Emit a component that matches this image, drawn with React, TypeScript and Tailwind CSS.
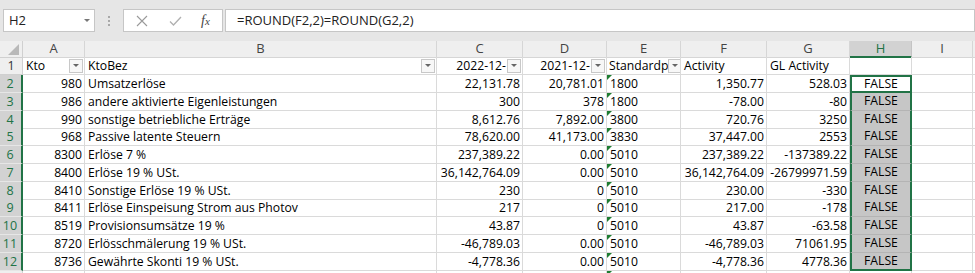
import React from "react";

type Row = {
  n: number;
  h: string;
  a: string;
  b: string;
  c: string;
  d: string;
  e: string;
  f: string;
  g: string;
};

const rows: Row[] = [
  { n: 2, h: "h-[18px]", a: "980", b: "Umsatzerlöse", c: "22,131.78", d: "20,781.01", e: "1800", f: "1,350.77", g: "528.03" },
  { n: 3, h: "h-[18px]", a: "986", b: "andere aktivierte Eigenleistungen", c: "300", d: "378", e: "1800", f: "-78.00", g: "-80" },
  { n: 4, h: "h-[17px]", a: "990", b: "sonstige betriebliche Erträge", c: "8,612.76", d: "7,892.00", e: "3800", f: "720.76", g: "3250" },
  { n: 5, h: "h-[18px]", a: "968", b: "Passive latente Steuern", c: "78,620.00", d: "41,173.00", e: "3830", f: "37,447.00", g: "2553" },
  { n: 6, h: "h-[18px]", a: "8300", b: "Erlöse 7 %", c: "237,389.22", d: "0.00", e: "5010", f: "237,389.22", g: "-137389.22" },
  { n: 7, h: "h-[18px]", a: "8400", b: "Erlöse 19 % USt.", c: "36,142,764.09", d: "0.00", e: "5010", f: "36,142,764.09", g: "-26799971.59" },
  { n: 8, h: "h-[17px]", a: "8410", b: "Sonstige Erlöse 19 % USt.", c: "230", d: "0", e: "5010", f: "230.00", g: "-330" },
  { n: 9, h: "h-[18px]", a: "8411", b: "Erlöse Einspeisung Strom aus Photov", c: "217", d: "0", e: "5010", f: "217.00", g: "-178" },
  { n: 10, h: "h-[18px]", a: "8519", b: "Provisionsumsätze 19 %", c: "43.87", d: "0", e: "5010", f: "43.87", g: "-63.58" },
  { n: 11, h: "h-[18px]", a: "8720", b: "Erlösschmälerung 19 % USt.", c: "-46,789.03", d: "0.00", e: "5010", f: "-46,789.03", g: "71061.95" },
  { n: 12, h: "h-[18px]", a: "8736", b: "Gewährte Skonti 19 % USt.", c: "-4,778.36", d: "0.00", e: "5010", f: "-4,778.36", g: "4778.36" },
];

const GRID =
  "grid grid-cols-[23px_62px_352px_86px_84px_74px_86px_83px_62px_61px_1fr]";

const cell = "border-r border-b border-[#dadada] overflow-hidden whitespace-nowrap leading-[17px] relative";

function FilterButton() {
  return (
    <span className="flex h-[14px] w-[14px] shrink-0 items-center justify-center border border-[#c8c8c8] bg-[#f7f7f7]">
      <span className="h-0 w-0 border-x-[3px] border-t-[3px] border-x-transparent border-t-[#666]" />
    </span>
  );
}

function ErrorMark() {
  return (
    <span className="absolute left-0 top-0 h-0 w-0 border-r-[5px] border-t-[5px] border-r-transparent border-t-[#1e7d32]" />
  );
}

function FormulaBar() {
  return (
    <div className="flex h-[41px] items-center bg-[#e6e6e6] pl-[3px]">
      <div className="flex h-[23px] w-[92px] items-center justify-between border border-[#c6c6c6] bg-white pl-[5px] pr-[4px] text-[13px] text-[#222]">
        <span>H2</span>
        <span className="h-0 w-0 border-x-[3px] border-t-[3px] border-x-transparent border-t-[#777]" />
      </div>
      <div className="flex w-[28px] flex-col items-center gap-[2px]">
        <span className="h-[2px] w-[2px] bg-[#a8a8a8]" />
        <span className="h-[2px] w-[2px] bg-[#a8a8a8]" />
        <span className="h-[2px] w-[2px] bg-[#a8a8a8]" />
      </div>
      <div className="flex h-[23px] w-[100px] items-center border border-[#c6c6c6] bg-white">
        <svg width="12" height="12" viewBox="0 0 12 12" className="ml-[12px]">
          <path d="M1 1L11 11M11 1L1 11" stroke="#9a9a9a" strokeWidth="1.1" fill="none" />
        </svg>
        <svg width="13" height="12" viewBox="0 0 13 12" className="ml-[21px]">
          <path d="M1 6.5L4.5 10L12 2" stroke="#b0b0b0" strokeWidth="1.3" fill="none" />
        </svg>
        <span className="ml-[19px] font-['Liberation_Serif',serif] text-[14px] italic text-[#444]">
          f<span className="text-[11px]">x</span>
        </span>
      </div>
      <div className="ml-[2px] flex h-[23px] flex-1 items-center border border-[#c6c6c6] bg-white pl-[11px] text-[13px] text-[#222]">
        =ROUND(F2,2)=ROUND(G2,2)
      </div>
    </div>
  );
}

function ColumnHeaders() {
  const letters = ["A", "B", "C", "D", "E", "F", "G", "H", "I"];
  return (
    <div className={`${GRID} h-[16px] bg-[#efefef] text-[13px] leading-[15px] text-[#444]`}>
      <div className="relative border-r border-b border-[#d0d0d0]">
        <span className="absolute bottom-[2px] right-[3px] h-0 w-0 [border-bottom:11px_solid_#b9b9b9] [border-left:11px_solid_transparent]" />
      </div>
      {letters.map((l) =>
        l === "H" ? (
          <div
            key={l}
            className="border-r border-[#c4c4c4] border-b-2 border-b-[#217346] bg-[#d2d2d2] text-center text-[#217346]"
          >
            {l}
          </div>
        ) : (
          <div key={l} className="border-r border-b border-[#d6d6d6] text-center">
            {l}
          </div>
        )
      )}
      <div className="border-b border-[#d6d6d6]" />
    </div>
  );
}

function HeaderRow() {
  return (
    <div className={`${GRID} h-[18px] bg-white`}>
      <div className="border-r border-b border-[#d0d0d0] bg-[#efefef] text-center text-[12.5px] leading-[17px] text-[#333]">
        1
      </div>
      <div className={`${cell} flex items-center justify-between pl-[3px] pr-[1px]`}>
        <span>Kto</span>
        <FilterButton />
      </div>
      <div className={`${cell} flex items-center justify-between pl-[3px] pr-[1px]`}>
        <span>KtoBez</span>
        <FilterButton />
      </div>
      <div className={`${cell} flex items-center justify-end gap-[1px] pr-[1px]`}>
        <span>2022-12-</span>
        <FilterButton />
      </div>
      <div className={`${cell} flex items-center justify-end gap-[1px] pr-[1px]`}>
        <span>2021-12-</span>
        <FilterButton />
      </div>
      <div className={`${cell} flex items-center justify-between pl-[2px] pr-[1px]`}>
        <span>Standardp</span>
        <FilterButton />
      </div>
      <div className={`${cell} pl-[3px]`}>Activity</div>
      <div className={`${cell} pl-[3px]`}>GL Activity</div>
      <div className={cell} />
      <div className={cell} />
      <div className="border-b border-[#dadada]" />
    </div>
  );
}

function DataRow({ r }: { r: Row }) {
  const first = r.n === 2;
  const last = r.n === 12;
  return (
    <div className={`${GRID} ${r.h} bg-white`}>
      <div className="border-r-2 border-r-[#217346] border-b border-b-[#e6e6e6] bg-[#d2d2d2] pr-[1px] text-center text-[12.5px] leading-[17px] text-[#217346]">
        {r.n}
      </div>
      <div className={`${cell} pr-[2px] text-right`}>{r.a}</div>
      <div className={`${cell} pl-[3px]`}>{r.b}</div>
      <div className={`${cell} pr-[2px] text-right`}>{r.c}</div>
      <div className={`${cell} pr-[2px] text-right`}>{r.d}</div>
      <div className={`${cell} pl-[3px]`}>
        <ErrorMark />
        {r.e}
      </div>
      <div className={`${cell} pr-[2px] text-right`}>{r.f}</div>
      <div className={`${cell} pr-[2px] text-right`}>{r.g}</div>
      {first ? (
        <div className="border-2 border-[#217346] bg-white text-center leading-[14px]">FALSE</div>
      ) : (
        <div
          className={`border-x-2 border-x-[#217346] bg-[#c6c6c6] text-center leading-[16px] ${
            last ? "border-b-2 border-b-[#217346]" : "border-b border-b-[#b4b4b4]"
          }`}
        >
          FALSE
        </div>
      )}
      <div className={cell} />
      <div className="border-b border-[#dadada]" />
    </div>
  );
}

export default function App() {
  return (
    <div className="h-[273px] w-[975px] overflow-hidden bg-white font-['Open_Sans',sans-serif] text-[12.2px] text-black">
      <FormulaBar />
      <ColumnHeaders />
      <HeaderRow />
      {rows.map((r) => (
        <DataRow key={r.n} r={r} />
      ))}
      <div className={`${GRID} h-[18px] bg-white`}>
        <div className="border-r border-[#d0d0d0] bg-[#efefef]" />
        <div className={cell} />
        <div className={cell} />
        <div className={cell} />
        <div className={cell} />
        <div className={cell}>
          <ErrorMark />
        </div>
        <div className={cell} />
        <div className={cell} />
        <div className={cell} />
        <div className={cell} />
        <div />
      </div>
    </div>
  );
}
